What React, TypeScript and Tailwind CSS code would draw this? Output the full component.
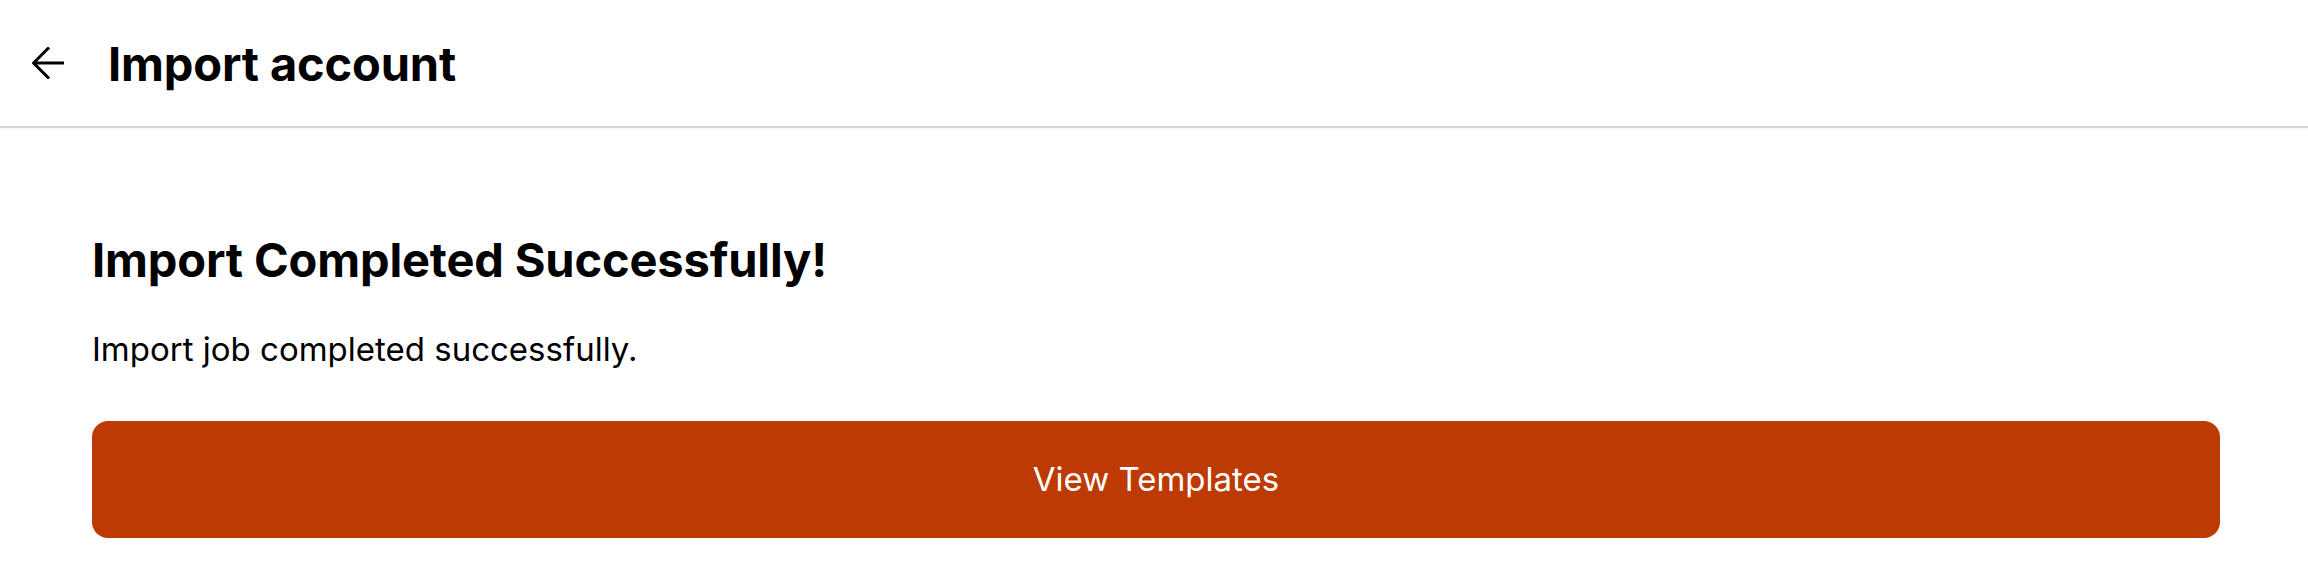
export default function App() {
  return (
    <main className="min-h-screen bg-white font-['Inter',sans-serif] text-black">
      <header className="flex h-[128px] items-center border-b-2 border-[#d6d6d6] pl-[32px] shadow-[0_1px_2px_rgba(0,0,0,0.04)]">
        <button className="flex h-[32px] w-[32px] items-center justify-center">
          <svg width="32" height="32" viewBox="0 0 32 32" fill="none" stroke="black" strokeWidth="3" strokeLinecap="square">
            <path d="M30.5 16H3" />
            <path d="M16 1.5L1.5 16L16 30.5" />
          </svg>
        </button>
        <h1 className="ml-[44px] text-[47px] leading-[57px] font-bold tracking-[-0.15px]">Import account</h1>
      </header>
      <section className="pl-[92px] pr-[88px] pt-[103px]">
        <h2 className="text-[47px] leading-[57px] font-bold tracking-[-0.15px]">Import Completed Successfully!</h2>
        <p className="mt-[41px] text-[33px] leading-[40px]">Import job completed successfully.</p>
        <button className="mt-[52px] flex h-[117px] w-full items-center justify-center rounded-[16px] bg-[#bd3a03] text-[33px] text-white">
          View Templates
        </button>
      </section>
    </main>
  )
}
